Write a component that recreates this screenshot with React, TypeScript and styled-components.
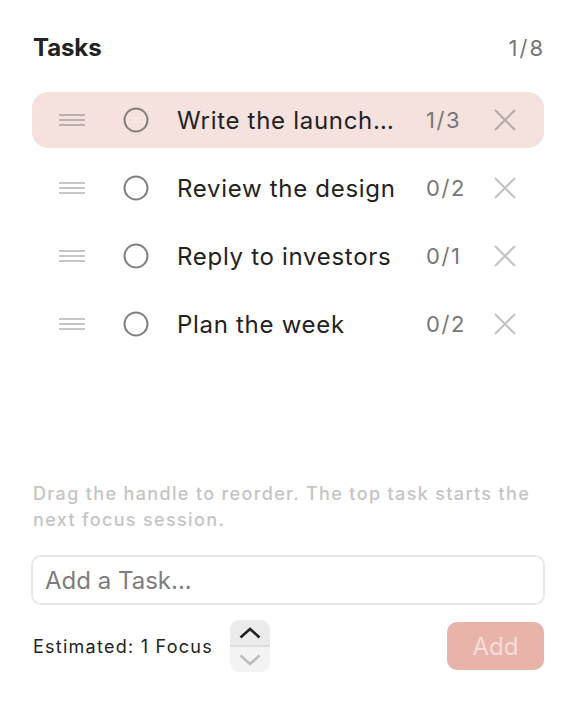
import React from 'react'
import styled, { createGlobalStyle } from 'styled-components'

const GlobalStyle = createGlobalStyle`
  html, body {
    margin: 0;
    padding: 0;
    background: #fff;
    font-family: Inter, 'Noto Sans', sans-serif;
    -webkit-font-smoothing: antialiased;
  }
  * {
    box-sizing: border-box;
  }
`

type Task = {
  title: string
  done: number
  total: number
}

const tasks: Task[] = [
  { title: 'Write the launch plan', done: 1, total: 3 },
  { title: 'Review the design', done: 0, total: 2 },
  { title: 'Reply to investors', done: 0, total: 1 },
  { title: 'Plan the week', done: 0, total: 2 },
]

const Page = styled.div`
  height: 704px;
  display: flex;
  flex-direction: column;
  padding: 32px 32px 32px 32px;
`

const Header = styled.div`
  display: flex;
  justify-content: space-between;
  align-items: baseline;
  padding: 0 1px 0 1px;
`

const Title = styled.h1`
  margin: 0;
  font-size: 24px;
  line-height: 32px;
  font-weight: 700;
  color: #222;
  letter-spacing: -0.1px;
`

const Counter = styled.span`
  font-size: 22px;
  letter-spacing: 2px;
  margin-right: -2px;
  color: #777;
`

const List = styled.ul`
  list-style: none;
  margin: 28px 0 0 0;
  padding: 0;
  display: flex;
  flex-direction: column;
  gap: 12px;
`

const Row = styled.li<{ $active?: boolean }>`
  height: 56px;
  border-radius: 16px;
  display: flex;
  align-items: center;
  padding: 0 28px 0 27px;
  background: ${(p) => (p.$active ? '#f5e1de' : 'transparent')};
`

const Handle = styled.span<{ $active?: boolean }>`
  width: 26px;
  height: 12px;
  display: flex;
  flex-direction: column;
  justify-content: space-between;

  i {
    display: block;
    height: 2px;
    background: ${(p) => (p.$active ? '#bcaeac' : '#c6c6c6')};
  }
`

const Check = styled.svg`
  margin-left: 38px;
  flex-shrink: 0;
`

const TaskName = styled.span`
  flex: 1;
  min-width: 0;
  margin-left: 28px;
  margin-right: 28px;
  font-size: 24px;
  letter-spacing: 0.7px;
  color: #222;
  white-space: nowrap;
  overflow: hidden;
  text-overflow: ellipsis;
`

const Progress = styled.span`
  width: 40px;
  font-size: 22px;
  letter-spacing: 1.6px;
  white-space: nowrap;
  color: #777;
`

const RemoveButton = styled.button<{ $active?: boolean }>`
  margin-left: 28px;
  width: 22px;
  height: 22px;
  padding: 0;
  border: 0;
  background: none;
  display: flex;
  color: ${(p) => (p.$active ? '#b5a9a7' : '#c2c2c2')};
`

const Hint = styled.p`
  margin: auto 0 0 0;
  padding-left: 1px;
  font-size: 18px;
  line-height: 26px;
  letter-spacing: 1.35px;
  font-weight: 500;
  color: #c4c4c4;
`

const TaskInput = styled.input`
  margin: 22px -1px 0 -1px;
  height: 50px;
  border: 2px solid #e8e8e8;
  border-radius: 10px;
  padding: 0 12px;
  font-family: inherit;
  font-size: 24px;
  color: #222;
  outline: none;

  &::placeholder {
    color: #7d7d7d;
  }
`

const Footer = styled.div`
  margin-top: 15px;
  display: flex;
  align-items: center;
  padding-left: 1px;
`

const Estimate = styled.span`
  font-size: 18px;
  letter-spacing: 1.25px;
  color: #222;
`

const Stepper = styled.div`
  margin-left: 17px;
  width: 40px;
  height: 52px;
  border-radius: 9px;
  overflow: hidden;
  display: flex;
  flex-direction: column;
`

const StepButton = styled.button<{ $up?: boolean }>`
  flex: 1;
  border: 0;
  padding: 0;
  display: flex;
  align-items: center;
  justify-content: center;
  background: ${(p) => (p.$up ? '#ebebeb' : '#f3f3f3')};
  color: ${(p) => (p.$up ? '#222' : '#bdbdbd')};
  border-bottom: ${(p) => (p.$up ? '2px solid #dedede' : '0')};
`

const AddButton = styled.button`
  margin-left: auto;
  width: 97px;
  height: 48px;
  border: 0;
  border-radius: 10px;
  background: #e8b4aa;
  color: #f6ddd8;
  font-family: inherit;
  font-size: 24px;
`

const CircleIcon = () => (
  <Check width="26" height="26" viewBox="0 0 26 26">
    <circle cx="13" cy="13" r="11.5" fill="none" stroke="#858080" strokeWidth="2" />
  </Check>
)

const CloseIcon = () => (
  <svg width="22" height="22" viewBox="0 0 22 22">
    <path d="M1 1 L21 21 M21 1 L1 21" stroke="currentColor" strokeWidth="2" fill="none" />
  </svg>
)

const Chevron = ({ up }: { up?: boolean }) => (
  <svg width="22" height="12" viewBox="0 0 22 12">
    <path
      d={up ? 'M1.5 10.5 L11 2 L20.5 10.5' : 'M1.5 1.5 L11 10 L20.5 1.5'}
      stroke="currentColor"
      strokeWidth="2.6"
      fill="none"
    />
  </svg>
)

export default function App() {
  return (
    <>
      <GlobalStyle />
      <Page>
        <Header>
          <Title>Tasks</Title>
          <Counter>1/8</Counter>
        </Header>
        <List>
          {tasks.map((t, i) => (
            <Row key={t.title} $active={i === 0}>
              <Handle $active={i === 0}>
                <i />
                <i />
                <i />
              </Handle>
              <CircleIcon />
              <TaskName>{t.title}</TaskName>
              <Progress>
                {t.done}/{t.total}
              </Progress>
              <RemoveButton $active={i === 0}>
                <CloseIcon />
              </RemoveButton>
            </Row>
          ))}
        </List>
        <Hint>Drag the handle to reorder. The top task starts the next focus session.</Hint>
        <TaskInput placeholder="Add a Task..." />
        <Footer>
          <Estimate>Estimated: 1 Focus</Estimate>
          <Stepper>
            <StepButton $up>
              <Chevron up />
            </StepButton>
            <StepButton>
              <Chevron />
            </StepButton>
          </Stepper>
          <AddButton>Add</AddButton>
        </Footer>
      </Page>
    </>
  )
}
